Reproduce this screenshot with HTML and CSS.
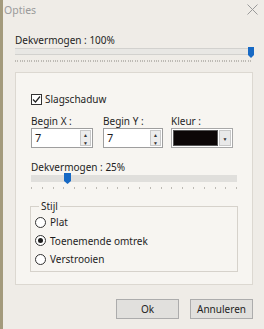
FILE: index.html
```html
<!DOCTYPE html>
<html lang="nl">
<head>
    <meta charset="UTF-8">
    <title>Opties</title>
    <link rel="stylesheet" href="styles.css">
</head>
<body>
    <div class="window">
        <div class="titlebar">
            <span class="title">Opties</span>
            <svg class="close" width="11" height="11" viewBox="0 0 11 11">
                <path d="M0.5 0.5 L10.5 10.5 M10.5 0.5 L0.5 10.5" stroke="#9a9a9a" stroke-width="1" fill="none"/>
            </svg>
        </div>
        <div class="content">
            <div class="label">Dekvermogen : 100%</div>
            <div class="slider slider-main">
                <div class="track"></div>
                <svg class="thumb thumb-main" width="6" height="11" viewBox="0 0 6 11">
                    <path d="M0 0 H6 V8 L3 11 L0 8 Z" fill="#1769c4"/>
                </svg>
                <div class="ticks ticks-dense"></div>
            </div>

            <div class="panel">
                <label class="check-row">
                    <span class="checkbox">
                        <svg width="9" height="9" viewBox="0 0 9 9">
                            <path d="M1 4.5 L3.5 7 L8 1.5" stroke="#222" stroke-width="1.2" fill="none"/>
                        </svg>
                    </span>
                    Slagschaduw
                </label>

                <div class="fields">
                    <div class="field">
                        <div class="label">Begin X :</div>
                        <div class="spin spin-x">
                            <span class="spin-value">7</span>
                            <span class="spin-btns">
                                <span class="spin-btn">&#9650;</span>
                                <span class="spin-btn">&#9660;</span>
                            </span>
                        </div>
                    </div>
                    <div class="field">
                        <div class="label">Begin Y :</div>
                        <div class="spin spin-y">
                            <span class="spin-value">7</span>
                            <span class="spin-btns">
                                <span class="spin-btn">&#9650;</span>
                                <span class="spin-btn">&#9660;</span>
                            </span>
                        </div>
                    </div>
                    <div class="field">
                        <div class="label">Kleur :</div>
                        <div class="color-combo">
                            <span class="swatch"></span>
                            <span class="combo-btn">&#9660;</span>
                        </div>
                    </div>
                </div>

                <div class="label label-opacity">Dekvermogen : 25%</div>
                <div class="slider slider-small">
                    <div class="track track-small"></div>
                    <svg class="thumb thumb-small" width="7" height="11" viewBox="0 0 7 11">
                        <path d="M0 0 H7 V8 L3.5 11 L0 8 Z" fill="#1769c4"/>
                    </svg>
                    <div class="ticks ticks-sparse"></div>
                </div>

                <fieldset class="group">
                    <legend>Stijl</legend>
                    <label class="radio-row"><span class="radio"></span>Plat</label>
                    <label class="radio-row"><span class="radio checked"></span>Toenemende omtrek</label>
                    <label class="radio-row"><span class="radio"></span>Verstrooien</label>
                </fieldset>
            </div>

            <div class="buttons">
                <button type="button" class="btn">Ok</button>
                <button type="button" class="btn">Annuleren</button>
            </div>
        </div>
    </div>
</body>
</html>
```

FILE: styles.css
```css
body {
    margin: 0;
    font-family: "Noto Sans", "Open Sans", sans-serif;
    font-size: 10px;
    color: #1e1e1e;
    background-color: #efece7;
}
.window {
    height: 329px;
    border-left: 3px solid #a39a7c;
    background-color: #efece7;
    box-sizing: border-box;
}
.titlebar {
    height: 23px;
    display: flex;
    align-items: center;
    justify-content: space-between;
    padding: 0 6px 0 1px;
}
.title {
    color: #9b9b9b;
    font-size: 10.5px;
    margin-top: -4px;
}
.close {
    margin-top: -4px;
}
.content {
    padding: 10px 11px 0 12px;
}
.label {
    height: 14px;
    line-height: 14px;
    white-space: nowrap;
}
.slider {
    position: relative;
}
.slider-main {
    margin-top: 1px;
    height: 24px;
    margin-right: 1px;
}
.track {
    height: 5px;
    margin-top: 1px;
    background-color: #e8e7e4;
    border-top: 1px solid #d2d1ce;
    border-bottom: 1px solid #d2d1ce;
}
.thumb {
    position: absolute;
    top: -1px;
}
.thumb-main {
    right: -2px;
}
.ticks {
    height: 2px;
    margin-top: 5px;
}
.ticks-dense {
    background: repeating-linear-gradient(to right, #bdbab4 0 1px, transparent 1px 2.35px);
}
.ticks-sparse {
    background: repeating-linear-gradient(to right, #bdbab4 0 1px, transparent 1px 10.8px);
    margin-top: 5px;
}
.panel {
    border: 1px solid #dcd8d1;
    background-color: #f7f5f1;
    height: 213px;
    box-sizing: border-box;
    padding: 19px 15px 0 15px;
}
.check-row {
    display: flex;
    align-items: center;
    height: 14px;
    gap: 3px;
}
.checkbox {
    width: 11px;
    height: 11px;
    border: 1px solid #333;
    box-sizing: border-box;
    display: flex;
    align-items: center;
    justify-content: center;
    background-color: #fff;
}
.fields {
    display: grid;
    grid-template-columns: 72px 68px 62px;
    margin-top: 8px;
}
.spin {
    display: flex;
    height: 20px;
    border: 1px solid #9e9e9e;
    background-color: #fff;
    box-sizing: border-box;
    padding: 1px;
}
.spin-x {
    width: 62px;
}
.spin-y {
    width: 60px;
}
.spin-value {
    flex: 1;
    padding-left: 2px;
    line-height: 16px;
    font-size: 11px;
}
.spin-btns {
    display: flex;
    flex-direction: column;
    width: 9px;
    border: 1px solid #c8c8c8;
    background-color: #ececec;
}
.spin-btn {
    flex: 1;
    font-size: 5px;
    line-height: 8px;
    text-align: center;
    color: #333;
}
.color-combo {
    display: flex;
    width: 62px;
    height: 20px;
    border: 1px solid #a8a8a8;
    background-color: #fff;
    box-sizing: border-box;
    padding: 1px;
}
.swatch {
    flex: 1;
    background-color: #0c0707;
    border: 1px solid #555;
}
.combo-btn {
    width: 10px;
    margin-left: 1px;
    background-color: #e9e9e9;
    border: 1px solid #c8c8c8;
    font-size: 5px;
    line-height: 16px;
    text-align: center;
    color: #333;
}
.label-opacity {
    margin-top: 12px;
}
.slider-small {
    margin-top: 1px;
    height: 17px;
}
.track-small {
    height: 7px;
    margin-top: 0;
    border: none;
    background-color: #e0dfdc;
}
.thumb-small {
    left: 33px;
    top: -2px;
}
.group {
    margin: 8px -1px 0 -1px;
    padding: 1px 4px 2px 4px;
    border: 1px solid #d6d2cb;
}
.group legend {
    padding: 0 2px;
    margin-left: 4px;
    line-height: 12px;
}
.radio-row {
    display: flex;
    align-items: center;
    height: 18.5px;
    gap: 4px;
}
.radio {
    width: 11px;
    height: 11px;
    border: 1px solid #333;
    border-radius: 50%;
    box-sizing: border-box;
    background-color: #fff;
    display: flex;
    align-items: center;
    justify-content: center;
}
.radio.checked::after {
    content: '';
    width: 5px;
    height: 5px;
    border-radius: 50%;
    background-color: #1e1e1e;
}
.buttons {
    display: flex;
    justify-content: flex-end;
    gap: 11px;
    margin-top: 14px;
}
.btn {
    width: 63px;
    height: 20px;
    padding: 0;
    font-family: inherit;
    font-size: 10px;
    color: #1e1e1e;
    background-color: #e1e0dd;
    border: 1px solid #acacac;
}
```
